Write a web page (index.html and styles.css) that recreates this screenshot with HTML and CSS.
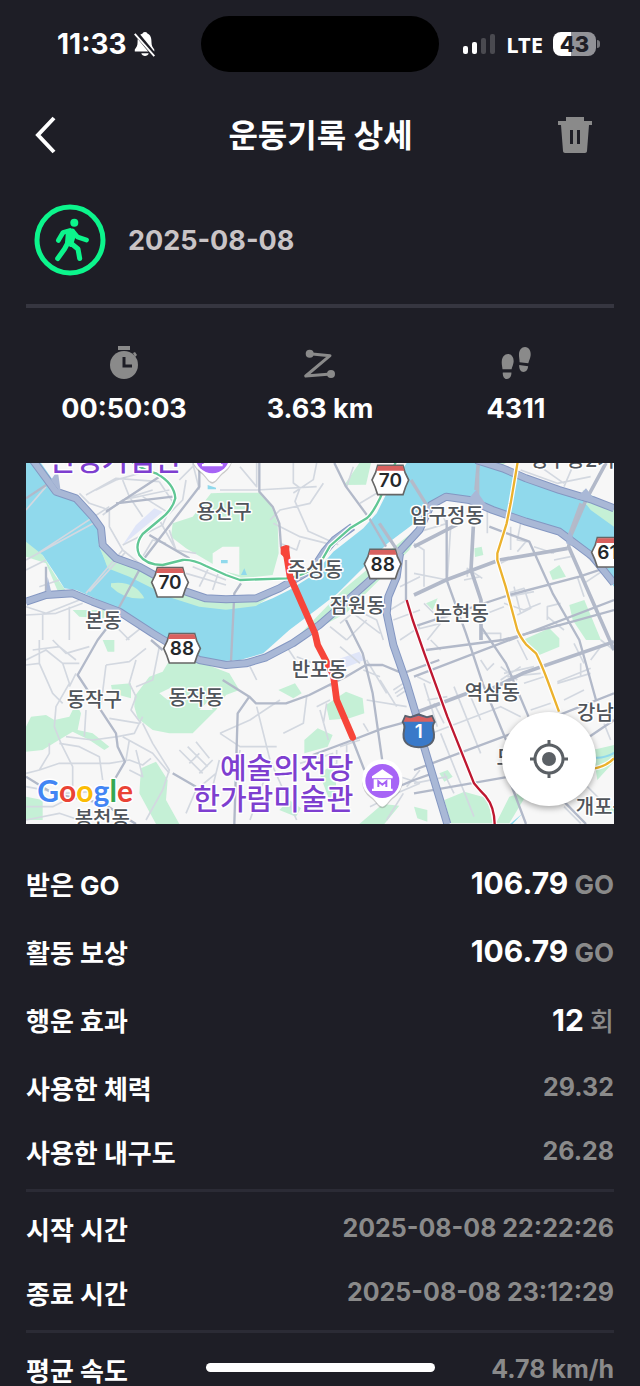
FILE: index.html
```
<!DOCTYPE html>
<html lang="ko">
<head>
<meta charset="UTF-8">
<title>운동기록 상세</title>
<meta name="viewport" content="width=device-width, initial-scale=1.0">
<link rel="stylesheet" href="styles.css">
</head>
<body>
<div class="app">
    <div class="status-bar">
        <div class="status-left">
            <span class="clock">11:33</span>
            <svg class="bell" width="24" height="26" viewBox="0 0 24 28">
                <path d="M12 1c-2 0-2 1-3 2C5 4 4 8 4 12c0 4-1 5-3 8v2h21v-2c-2-3-3-4-3-8 0-4-1-8-4-9-1-1-1-2-3-2z" fill="#fff"/>
                <path d="M8 24h8c-1 4-7 4-8 0z" fill="#fff"/>
                <path d="M2 2l20 24" stroke="#1e1e26" stroke-width="5"/>
                <path d="M1 3l21 24" stroke="#fff" stroke-width="2"/>
            </svg>
        </div>
        <div class="island"></div>
        <div class="status-right">
            <svg width="34" height="20" viewBox="0 0 34 20">
                <rect x="1" y="12" width="5" height="8" rx="2" fill="#fff"/>
                <rect x="10" y="8" width="5" height="12" rx="2" fill="#fff"/>
                <rect x="19" y="4" width="5" height="16" rx="2" fill="#4a4a50"/>
                <rect x="28" y="0" width="5" height="20" rx="2" fill="#4a4a50"/>
            </svg>
            <span class="network">LTE</span>
            <span class="battery">43</span>
        </div>
    </div>

    <header class="header">
        <button class="icon-button" type="button" aria-label="뒤로">
            <svg width="24" height="40" viewBox="0 0 24 40"><path d="M20 3L4 20l16 17" fill="none" stroke="#fff" stroke-width="4"/></svg>
        </button>
        <h1>운동기록 상세</h1>
        <button class="icon-button" type="button" aria-label="삭제">
            <svg width="36" height="38" viewBox="0 0 36 38" fill="#8a8a8a">
                <path d="M9 1h18v4h8v4H1V5h8z"/>
                <path fill-rule="evenodd" d="M4 9h28l-2 26c0 1-1 2-2 2H8c-1 0-2-1-2-2zM13 14v14h3V14zM20 14v14h3V14z"/>
            </svg>
        </button>
    </header>

    <main class="content">
        <section class="activity">
            <svg width="72" height="72" viewBox="0 0 72 72" fill="none" stroke="#0cf58c" stroke-linecap="round" stroke-linejoin="round">
                <circle cx="36" cy="36" r="33" stroke-width="5"/>
                <circle cx="40.3" cy="18.7" r="4" fill="#0cf58c" stroke="none"/>
                <path d="M34 27L39 27 40 31 37 41 33 39z" fill="#0cf58c" stroke-width="4"/>
                <path d="M36 26.5L29 28.5 24.3 36.5M38.5 27L43.5 33 52.5 36" stroke-width="4.8"/>
                <path d="M34 38.5L30.5 45 23.7 54.5M36 38.5L44 45 45.7 54.5" stroke-width="5"/>
            </svg>
            <time datetime="2025-08-08">2025-08-08</time>
        </section>

        <hr class="rule">

        <ul class="stats">
            <li>
                <svg width="36" height="36" viewBox="0 0 36 36" fill="#8a8a8a">
                    <path d="M12 1h12v4H12zM27 8l2-1 2 3-2 2z"/>
                    <circle cx="18" cy="20" r="14"/>
                    <path d="M18 12v9h8" fill="none" stroke="#1e1e26" stroke-width="3"/>
                </svg>
                <span>00:50:03</span>
            </li>
            <li>
                <svg width="36" height="36" viewBox="0 0 36 36" fill="#8a8a8a">
                    <path d="M7.7 8.7L28 10.7 3.7 31 29 29" fill="none" stroke="#8a8a8a" stroke-width="3" stroke-linecap="round" stroke-linejoin="round"/>
                    <circle cx="7.7" cy="8.7" r="4"/>
                    <circle cx="29" cy="29" r="4"/>
                </svg>
                <span>3.63 km</span>
            </li>
            <li>
                <svg width="36" height="36" viewBox="0 0 36 36" fill="#8a8a8a">
                    <path d="M4.5 24.3C4.2 21 3.5 19 3.8 16 4.2 12 6.5 9 10 9 14 9 16 13 15.6 17 15.3 20 14 22 13.6 24.3z"/>
                    <path d="M4.8 27.5h8.6C13.6 31 12 34 9 34 6 34 4.6 31 4.8 27.5z"/>
                    <path d="M21.6 17.2C21.6 14 20.8 12 21 9 21.3 5 23.5 2 27 2 31 2 33 6 32.7 10 32.4 13 31 15.500 30.3 18.200z"/>
                    <path d="M21.2 20l9 1.300C29.800 25 28 27 25.500 27 22.500 27 21 24 21.200 20z"/>
                </svg>
                <span>4311</span>
            </li>
        </ul>

        <section class="map">
            <svg class="map-canvas" viewBox="0 9 1764 1083" preserveAspectRatio="xMidYMid slice" role="img" aria-label="운동 경로 지도">
                <defs>
                    <g id="shield">
                        <path d="M-38 -44H38Q42 -22 55 0Q45 20 38 44H-38Q-45 20 -55 0Q-42 -22 -38 -44Z" fill="#fff" stroke="#666" stroke-width="5"/>
                        <path d="M-37 -42H37L42 -28H-42Z" fill="#d9615f"/>
                    </g>
                    <g id="pin">
                        <path d="M0 77C-12 77-22 53-36 45a61 61 0 1 1 72 0C22 53 12 77 0 77z" fill="#888" opacity=".4" transform="translate(0 5)"/>
                        <path d="M0 77C-12 77-22 53-36 45a61 61 0 1 1 72 0C22 53 12 77 0 77z" fill="#fff"/>
                        <circle r="51" fill="#a764f6"/>
                        <path d="M-31 -14L0 -35 31 -14V-8H-31zM-26 -5h52v28h-52zM-31 23h62v7h-62z" fill="#fff"/>
                        <path d="M-12 18V1L0 11 12 1v17" fill="none" stroke="#a764f6" stroke-width="6"/>
                    </g>
                </defs>

                <rect y="9" width="1764" height="1083" fill="#f7f7f7"/>

                <!-- parks -->
                <g fill="#c5f0d6">
                    <path d="M440 190L500 170 555 100 600 98H700L735 135 755 190 758 280 740 345 690 350 642 355 600 335 540 300 480 265 435 230z"/>
                    <path d="M325 710L370 650 410 635 425 610 520 605 610 640 640 690 600 705 570 750 500 820 430 820 380 810 335 775 325 740z"/>
                    <path d="M0 800L15 770 60 765 85 780 130 770 150 730 165 760 155 810 200 820 250 860 235 870 190 840 140 815 90 845 50 870 0 875zM345 925L390 905 425 960 420 1020 460 1092H390L340 1000z"/>
                    <path d="M230 540h35v35h-20zM255 675l60-5v45l-55-15zM140 450h95v25l-75-5z"/>
                    <path d="M955 75L1000 9h35l-15 65zM757 690l50-20 20 30-25 15zM900 735l60-40 50 20 5 45-45 15-60 5zM835 840l40-35 45 20-15 35-70 20zM880 940l50-30v80l-20 30z"/>
                    <path d="M1345 265l22-5 5 25-25 6zM1570 335l30-20 20 35-40 10zM1200 430l35-15-15 35zM1630 435l45-15 50 120h-45l-40-60zM1490 540l80-35 30 30v25l-60 25z"/>
                    <path d="M1255 1020l60-25 70 20 15 75h-125zM1450 1010l60-20-60 100h-40zM1700 870l64-15v50l-50 55zM1164 1040l40 10v35l-30-10zM1000 1092l70-60 50 5-45 55z"/>
                    <path d="M1240 940l25-10 15 20-25 15zM1710 1050l30-20 24 10v20zM0 1010l50 10v60H0z"/>
                    <path d="M760 1050l30-30 35 25-15 25z"/>
                </g>
                <path d="M560 280l30-20h50v85l-80-20zM520 750l30-30 10 30zM400 700l40-20-15 40z" fill="#f7f7f7"/>

                <!-- riverside green -->
                <path d="M0 235L50 285 90 350 125 400 100 405 60 310 0 290zM215 240L235 260 290 305 350 330 500 400 620 430 700 420 690 440 600 450 480 425 340 360 240 320zM800 545L950 390 1130 240 1182 200 1150 270 960 460zM1350 9h90l-40 20zM1670 90l94 55v60l-70-30z" fill="#c5f0d6"/>

                <!-- river -->
                <path d="M0 9L45 9 105 95 150 115 200 165 222 200 218 255 245 320 310 340 370 375 480 420 540 440 600 447 690 435 740 415 790 390 862 345 922 275 1012 205 1052 160 1082 100 1142 9 1374 9 1494 50 1594 85 1664 110 1694 150 1764 200 1764 380 1694 290 1634 240 1594 210 1484 185 1394 150 1314 115 1254 110 1214 135 1165 190 1085 250 1005 330 935 400 870 450 790 510 712 580 642 600 582 604 520 595 430 540 380 515 280 450 200 412 150 390 115 385 90 345 50 285 0 245Z" fill="#90d9ec"/>
                <path d="M218 250L245 285 280 305 340 330 400 365 480 400 540 425 600 430 690 425 740 405 690 438 600 449 520 440 440 415 370 380 310 350 245 325z" fill="#c5f0d6"/>
                <path d="M255 370q70-10 100 45q-60 5-100-35z" fill="#c5f0d6"/>
                <g fill="#90d9ec">
                    <path d="M545 75l25 8v5h-25zM585 300h20v10h-20zM645 345l10-20 8 20z"/>
                    <path d="M1710 890q30 0 54-15v8q-30 15-54 13zM1490 1060l-30 32h-8z"/>
                </g>
                <path d="M330 195l55-50 25 10-120 100zM930 600l70-25 15 25-75 30z" fill="#dfe5f8"/>

                <!-- small streets -->
                <g class="street">
                    <path d="M160 100L190 130 250 150 300 115 380 90M210 90L270 60 340 40M290 60l20 50 40 60M180 105l90-50 130 10M250 150v50l40 70 50 40M230 165l60-45 140-30M350 110l80 50 40-40 10-60M400 65l40 60-30 70-120 60"/>
                    <path d="M0 150L60 80M0 300L220 180M20 290L250 140M180 400L290 270M190 395L300 275M0 330l60-30M40 380l60-20"/>
                    <path d="M400 180l50 90M430 210l20 60 60 10M350 290l30-50 40 10M480 340l120 35M500 320l100 40M520 380l30-60M560 390l20-60"/>
                    <path d="M0 440l60 20 100-40M0 465l90-5 80-30M50 460v80M130 440v100M270 500l40 40M300 540l50-40 30 30M460 60l40-40M500 9l20 80"/>
                </g>
                <g class="street" transform="translate(582)">
                    <path d="M0 90h110l180-10M110 0v80l-50-60M220 9v60l20 15-15 40 40 90 90 40M290 9l-10 50-60 40M150 180l30-30 90-20 40-60M160 190l80 40 80 20M180 250l50 20 10-30M380 80l20-60M420 130l50-30"/>
                    <path d="M360 490l50-40 60 30 20 60M380 540l60-60M400 460l80 60M330 500l50 40M560 420l-50 30M540 380l60-30M520 480l80-30M540 540l60-40"/>
                </g>
                <g class="street" transform="translate(1164)">
                    <path d="M320 30l110 40 100-20M350 0l100 70M450 80l30-70M0 250l30 20v110M0 340l100 20 10-160M80 150l20 50M100 190L0 220M220 150v70M320 190l-10 50 30 5M290 200v70M340 240l-30 35"/>
                    <path d="M260 310l40-20M150 360l50-10M160 350v-25l45 30M280 400l50-15 20 60-40 20M280 410l80-15M300 380l20 80M360 260l60 20M410 280l40-15M420 300l50-10M520 290l50 50M400 480v-40l40-10M400 470l50 40M0 510l80-20M30 430l50 50 80-40M80 490l-40 50"/>
                    <path d="M270 430l60 20 50-20M220 460l50-20M200 520h60v20M490 350l20 60M510 370l60-40"/>
                </g>
                <g class="street" transform="translate(0 540)">
                    <path d="M0 60L60 30 110 70H160M40 0v70l40 90 30 30M20 30l80-10 50 40M110 70l20 60-40 70-5 60 20 50 35 70v60M150 100l-20 40M80 0l40 40 70-20M0 75l40-5"/>
                    <path d="M240 75l-5 40-10 80M240 75l70-10 50-40M330 60l-20 70 20 40-15 40 30 40M330 140l50-20 20-100M180 210l-5 80M250 235l90 15M120 290l80 10 75-10 50-10 25-50"/>
                    <path d="M0 400l40-10 60-20h150l60-10 40 15 25-20M70 310v30l-30 50M100 310l60 10 60 30 10 70M290 290l90 50 50 60M350 250l30 60 50 80-20 60-50 90M310 300l-10 60M330 330l20 80-40-20"/>
                    <path d="M0 440l110 20 90-5M0 500h80l60-30M0 540l100-20 60 20M460 330l70 70M485 320l60 60M510 305l40 50M490 370l30-30M520 400l40-40M580 360l-20 80M480 520l30-70 60-50"/>
                </g>
                <g class="street" transform="translate(582 540)">
                    <path d="M90 80l20 40M200 20l40 60M230 50l50 20M0 280l60 40h110M0 280l90-40 90-60M110 200l40 160 80 180M150 370L90 540M260 170l-10 80-60 30M60 330l-10 80M290 200l40-20M320 190l-10 60M300 210l25 90M360 20l60 50M310 50l50 40-30 50"/>
                    <path d="M430 90l50 20M440 60l60 100M520 150l30-20M525 160l30-20M530 170l30-20M440 180l120 20M430 250l15 25M350 330v50l30-10v-60M360 320l60-20M240 370l100-30M480 120l50 80M540 410l60 20M560 440l40-50M450 500l80-40 70-30M500 540l50-80"/>
                </g>
                <g class="street" transform="translate(1164 540)">
                    <path d="M50 0l30 30M200 60l20 30 20-20M120 140l80 200M30 130l40 130M60 190l30 60M170 170l30 70M10 110l40 20M40 180l60-10M0 300l260-100 60 30M80 280l100 250M90 400l30 60M260 120l60-40M260 80l50 40M270 100l90-20M280 110l100-10M310 0l30 60"/>
                    <path d="M330 130l60-20M350 210l60-20M430 130l100-30M430 125l100-40M500 70v40M530 60l30-40M480 10l30 60M400 130l30 70M450 180l60-30M560 0l40 30M570 250l20 50M0 430l100-20M190 440l40 60M520 440l50 50M450 500l50 50"/>
                </g>

                <!-- arterial roads -->
                <g class="road">
                    <path d="M0 115L75 65M275 450L340 330M355 295L520 80V9M370 225L490 295M240 155L400 50M270 130L440 110M60 320V400M280 455L215 540 155 645 270 820 275 860 297 905 265 960M0 950L80 1000 230 1030 330 1092"/>
                    <path d="M375 540L410 570M615 605L625 400 645 370M925 9L960 80 1030 175 1080 260M1140 300L1140 420M700 9V95L740 140 760 190 765 260 790 310"/>
                    <path d="M1357 9L1350 90M1342 200L1335 330 1365 420 1365 540M1164 260L1300 190M1740 9L1680 120 1635 225 1628 260 1764 570" class="road-wide"/>
                    <path d="M1164 405L1260 360 1420 300 1625 265" class="road-wide"/>
                    <path d="M1164 500L1450 405 1660 350 1764 315M1200 570L1430 540 1620 490 1764 450M1390 200L1510 245 1580 400 1660 540 1710 720M1262 180V360L1320 520 1370 670 1440 840"/>
                    <path d="M1365 500L1440 610 1520 800M1164 650L1764 420"/>
                    <path d="M1390 690L1490 640 1764 545" class="road-wide"/>
                    <path d="M1164 760L1350 690" class="road-wide"/>
                    <path d="M1164 930L1460 820 1764 700M1164 1000L1450 950"/>
                    <path d="M590 660L670 710 690 730 780 730 850 705 960 650 1020 615 1070 615 1130 640 1240 600M670 710L635 760 625 1092M960 480L1010 580 1040 700 1070 910M860 885L980 840 1070 805 1180 775M980 840L1015 930M440 940L510 980M1070 1000L1164 960 1220 940M1450 960L1500 1092M1590 1000L1680 1092M1690 830L1764 780"/>
                </g>

                <!-- riverside expressways -->
                <g class="expressway-edge">
                    <path id="north" d="M20 0L90 95 150 115 200 170 225 205 230 255 270 295 340 320 385 345 480 395 540 415 600 418 690 415 760 385 820 350 862 325 895 275 925 240 980 200"/>
                    <path id="south" d="M0 425L60 405 140 400 200 425 280 455 380 520 430 550 520 600 600 615 660 610 720 592 800 550 880 495 960 425 1050 345 1120 275 1180 210 1215 135 1260 110 1330 120 1400 150 1500 185 1600 215 1640 245 1700 290 1764 370"/>
                    <path id="east" d="M1350 0L1430 25 1500 55 1600 90 1700 120 1764 145"/>
                    <path id="trunk" d="M1122 280L1112 350 1087 410 1082 460 1102 555 1142 670 1172 770 1194 860 1264 1092"/>
                </g>
                <g class="expressway">
                    <use href="#north"/>
                    <use href="#south"/>
                    <use href="#east"/>
                    <use href="#trunk"/>
                </g>
                <path d="M1060 190l60 90M1355 40v80M1665 130l-35 95M1155 60l50 80" fill="none" stroke="#b4bac9" stroke-width="10"/>
                <path d="M60 405L65 350 78 405zM75 60l30 40-10-70zM1325 120l25-30 35 50zM1650 115l30-30 35 45zM1620 250l12-40 18 50z" fill="#a9b8d6"/>

                <!-- subway lines -->
                <g class="subway-edge">
                    <path id="green-line" d="M310 0Q350 30 390 40 445 70 448 115 440 150 400 180L350 222Q325 255 340 285 360 315 410 315L470 300Q500 298 540 318L600 345 642 360 782 355Q850 345 888 300"/>
                    <path id="green-line-east" d="M888 300L912 258 972 205 1022 175Q1040 160 1062 115L1112 0"/>
                    <path id="yellow-line" d="M1476 0L1454 130 1442 190 1414 280V300L1439 380 1474 510Q1482 530 1500 553L1530 580Q1545 610 1564 660L1599 755M1700 926Q1740 920 1764 895"/>
                    <path id="red-line" d="M1142 420L1160 480 1195 580 1264 770 1344 970Q1360 990 1380 1010 1405 1040 1406 1092"/>
                </g>
                <g class="subway">
                    <use href="#green-line" stroke="#61c795"/>
                    <use href="#green-line-east" stroke="#61c795"/>
                    <use href="#yellow-line" stroke="#ecb22d"/>
                    <use href="#red-line" stroke="#be1730"/>
                </g>

                <!-- walked route -->
                <path class="track" d="M780 275L792 350 867 520 875 555 922 645 932 720 980 832"/>
                <path d="M766 262l14-5 8 2v28l-12 4-10-10z" fill="#f7453a" stroke="#f7453a" stroke-width="4"/>

                <g class="place">
                    <text x="594" y="177">용산구</text>
                    <text x="1263" y="190">압구정동</text>
                    <text x="868" y="351">주성동</text>
                    <text x="994" y="459">잠원동</text>
                    <text x="1306" y="484">논현동</text>
                    <text x="232" y="504">본동</text>
                    <text x="205" y="740">동작구</text>
                    <text x="510" y="734">동작동</text>
                    <text x="880" y="651">반포동</text>
                    <text x="1399" y="720">역삼동</text>
                    <text x="1736" y="779">강남구</text>
                    <text x="1732" y="1063">개포동</text>
                    <text x="1494" y="916">도곡동</text>
                    <text x="229" y="1099">봉천동</text>
                    <text x="1640" y="20">성수동2가</text>
                </g>
                <g class="landmark">
                    <text x="467" y="33">전쟁기념관</text>
                    <text x="982" y="958">예술의전당</text>
                    <text x="982" y="1050">한가람미술관</text>
                </g>

                <use href="#pin" x="559" y="-11"/>
                <use href="#pin" x="1069" y="963"/>

                <g class="route-number">
                    <use href="#shield" x="432" y="367"/>
                    <text x="432" y="388">70</text>
                    <use href="#shield" x="468" y="565"/>
                    <text x="468" y="586">88</text>
                    <use href="#shield" x="1093" y="60"/>
                    <text x="1093" y="81">70</text>
                    <use href="#shield" x="1070" y="312"/>
                    <text x="1070" y="333">88</text>
                    <use href="#shield" x="1752" y="277"/>
                    <text x="1744" y="298">61</text>
                    <path d="M1138 768l14 4 26-9 26 9 14-4 8 18q-8 10-4 25 12 48-44 51-54-3-44-51 4-15-4-25z" fill="#3979c9" stroke="#59616e" stroke-width="6"/>
                    <path d="M1139 771l14 4 25-8 25 8 14-4 6 14h-90z" fill="#d9615f"/>
                    <text x="1178" y="835" fill="#fff">1</text>
                </g>

                <text class="google" x="34" y="1026"><tspan fill="#4285f4">G</tspan><tspan fill="#ea4335">o</tspan><tspan fill="#fbbc05">o</tspan><tspan fill="#4285f4">g</tspan><tspan fill="#34a853">l</tspan><tspan fill="#ea4335">e</tspan></text>
            </svg>
            <button class="locate" type="button" aria-label="현재 위치">
                <svg width="38" height="38" viewBox="0 0 38 38" fill="none" stroke="#5b6065" stroke-width="3">
                    <circle cx="19" cy="19" r="14"/>
                    <circle cx="19" cy="19" r="7" fill="#5b6065" stroke="none"/>
                    <path d="M19 0v6M19 32v6M0 19h6M32 19h6"/>
                </svg>
            </button>
        </section>

        <dl class="details">
            <div class="row tall"><dt>받은 GO</dt><dd><strong>106.79</strong> GO</dd></div>
            <div class="row tall"><dt>활동 보상</dt><dd><strong>106.79</strong> GO</dd></div>
            <div class="row tall"><dt>행운 효과</dt><dd><strong>12</strong> <span class="unit">회</span></dd></div>
            <div class="row"><dt>사용한 체력</dt><dd>29.32</dd></div>
            <div class="row"><dt>사용한 내구도</dt><dd>26.28</dd></div>
        </dl>
        <hr class="rule thin">
        <dl class="details">
            <div class="row"><dt>시작 시간</dt><dd>2025-08-08 22:22:26</dd></div>
            <div class="row"><dt>종료 시간</dt><dd>2025-08-08 23:12:29</dd></div>
        </dl>
        <hr class="rule thin">
        <dl class="details">
            <div class="row"><dt>평균 속도</dt><dd>4.78 km/h</dd></div>
        </dl>
    </main>

    <div class="home-indicator"></div>
</div>
</body>
</html>
```
FILE: styles.css
```
* {
    margin:0;
    padding:0;
    box-sizing:border-box;
}

body {
    font-family:Inter, "Noto Sans CJK KR", sans-serif;
    color:#fff;
    background-color:#1e1e26;
}

button {
    border:0;
    background:none;
    cursor:pointer;
}

svg {
    display:block;
}

.app {
    position:relative;
    height:100vh;
    overflow:hidden;
}

/* status bar */
.status-bar {
    display:grid;
    grid-template-columns:1fr 238px 1fr;
    align-items:center;
    padding-top:16px;
}

.status-left, .status-right {
    display:flex;
    align-items:center;
}

.status-left {
    gap:6px;
    padding-left:57px;
}

.status-right {
    justify-content:flex-end;
    gap:10px;
    padding-right:44px;
}

.clock {
    font-size:28px;
    font-weight:700;
}

.island {
    height:56px;
    border-radius:28px;
    background-color:#000;
}

.network {
    font-family:"Noto Sans", sans-serif;
    font-size:22px;
    font-weight:700;
    line-height:24px;
}

.battery {
    position:relative;
    width:43px;
    height:24px;
    border-radius:8px;
    font-size:22px;
    font-weight:800;
    line-height:24px;
    color:#1e1e26;
    text-align:center;
    background:linear-gradient(to right, #fff 43%, #929297 43%);
}

.battery:after {
    content:"";
    position:absolute;
    top:8px;
    right:-4px;
    width:3px;
    height:8px;
    border-radius:0 4px 4px 0;
    background-color:#77777c;
}

/* title bar */
.header {
    display:flex;
    align-items:center;
    justify-content:space-between;
    height:96px;
    margin-top:15px;
    padding:0 47px 0 34px;
}

.icon-button {
    display:flex;
    align-items:center;
    width:54px;
    height:44px;
}

.icon-button:last-child {
    justify-content:flex-end;
    width:40px;
}

h1 {
    padding-bottom:4px;
    font-size:32px;
    font-weight:700;
}

.content {
    padding:0 26px;
}

.activity {
    display:flex;
    align-items:center;
    gap:22px;
    padding:21px 8px 28px;
    color:#c9c4c6;
}

.activity time {
    font-size:27px;
    font-weight:700;
}

.rule {
    height:4px;
    border:0;
    background-color:#363640;
}

.rule.thin {
    height:3px;
    margin:5px 0;
    background-color:#2b2b35;
}

.stats {
    display:grid;
    grid-template-columns:repeat(3, 1fr);
    padding:37px 0 36px;
    list-style:none;
}

.stats li {
    display:flex;
    flex-direction:column;
    align-items:center;
    gap:10px;
    font-size:27px;
    font-weight:700;
    line-height:36px;
}

/* map */
.map {
    position:relative;
}

.map-canvas {
    width:100%;
    height:auto;
}

.street {
    fill:none;
    stroke:#d3d8e0;
    stroke-width:5;
    stroke-linejoin:round;
}

.road {
    fill:none;
    stroke:#b2b9c9;
    stroke-width:7;
    stroke-linejoin:round;
}

.road-wide {
    stroke-width:11;
}

.expressway-edge, .expressway {
    fill:none;
    stroke:#8497c2;
    stroke-width:24;
    stroke-linejoin:round;
}

.expressway {
    stroke:#a9b8d6;
    stroke-width:18;
}

.subway-edge, .subway {
    fill:none;
    stroke:#fff;
    stroke-width:14;
    stroke-linejoin:round;
}

.subway {
    stroke:none;
    stroke-width:7;
}

.track {
    fill:none;
    stroke:#f7453a;
    stroke-width:20;
    stroke-linecap:round;
    stroke-linejoin:round;
}

.place, .landmark, .google {
    paint-order:stroke;
    stroke:#fff;
    stroke-width:9;
    stroke-linejoin:round;
}

.place {
    font-size:60px;
    font-weight:500;
    fill:#50555b;
    text-anchor:middle;
}

.landmark {
    font-size:87px;
    font-weight:500;
    fill:#7e3fd0;
    text-anchor:end;
}

.google {
    font-family:Lato, sans-serif;
    font-size:90px;
    font-weight:700;
}

.route-number {
    font-size:57px;
    font-weight:600;
    fill:#25282b;
    text-anchor:middle;
}

.locate {
    position:absolute;
    right:18px;
    bottom:18px;
    display:flex;
    align-items:center;
    justify-content:center;
    width:94px;
    height:94px;
    border-radius:50%;
    background-color:#fff;
    box-shadow:0 2px 6px rgba(0, 0, 0, 0.35);
}

/* detail rows */
.map + .details {
    margin-top:26px;
}

.row {
    display:flex;
    align-items:center;
    justify-content:space-between;
    height:64px;
    padding-bottom:2px;
    font-size:26px;
    font-weight:700;
}

.row.tall {
    height:68px;
}

.row:not(.tall) dd {
    font-size:25px;
}

.row.tall + .row:not(.tall) {
    margin-top:2px;
}

dd {
    color:#8a8a8a;
}

dd strong {
    font-size:30px;
    font-weight:700;
    color:#fff;
}

.unit {
    font-weight:500;
}

.home-indicator {
    position:absolute;
    bottom:14px;
    left:50%;
    width:229px;
    height:9px;
    margin-left:-114px;
    border-radius:5px;
    background-color:#fff;
}
```
